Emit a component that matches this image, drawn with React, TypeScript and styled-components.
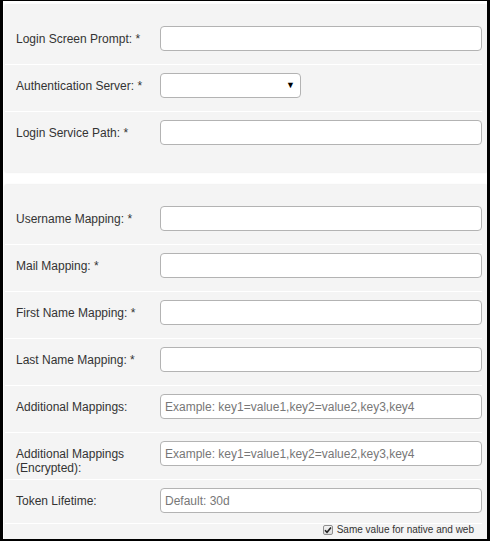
import React from 'react';
import styled, { createGlobalStyle } from 'styled-components';

const GlobalStyle = createGlobalStyle`
  html, body {
    margin: 0;
    padding: 0;
    background: #fff;
  }
  * {
    box-sizing: border-box;
  }
`;

// Cadre extérieur de la capture
const Frame = styled.div`
  width: 490px;
  height: 541px;
  overflow: hidden;
  background: #fff;
  border-style: solid;
  border-color: #000;
  border-width: 1px 3px 2px 3px;
  padding: 4px 0 0 2px;
  font-family: 'Liberation Sans', Arial, sans-serif;
  color: #333;
  display: flex;
  flex-direction: column;
  gap: 13px;
`;

const Panel = styled.section<{ $last?: boolean }>`
  background: #f4f4f4;
  box-shadow: 0 0 2px rgba(0, 0, 0, 0.15);
  padding: 13px 5px ${({ $last }) => ($last ? '20px' : '14px')} 0;
  display: flex;
  flex-direction: column;
  flex-shrink: 0;
`;

const Row = styled.div`
  display: flex;
  align-items: flex-start;
  height: 47px;
  padding: 8px 0 0 11px;
  border-top: 1px solid #fff;

  &:first-child {
    border-top: none;
    height: 46px;
  }
`;

// le libellé peut déborder sur deux lignes sans agrandir la ligne
const Label = styled.label`
  width: 144px;
  height: 25px;
  flex-shrink: 0;
  padding: 6px 14px 0 0;
  font-size: 12px;
  line-height: 14px;
  color: #333;
  overflow: visible;
`;

const TextInput = styled.input`
  flex: 1;
  height: 25px;
  margin: 0;
  padding: 0 4px;
  background: #fff;
  border: 1px solid #b3b3b3;
  border-radius: 4px;
  font-family: 'Liberation Sans', Arial, sans-serif;
  font-size: 12px;
  color: #333;
  outline: none;

  &::placeholder {
    color: #777;
  }
`;

const SelectWrap = styled.div`
  position: relative;
  width: 141px;
  height: 25px;
`;

const Select = styled.select`
  appearance: none;
  width: 100%;
  height: 100%;
  margin: 0;
  padding: 0 4px;
  background: #fff;
  border: 1px solid #b3b3b3;
  border-radius: 4px;
  font-family: 'Liberation Sans', Arial, sans-serif;
  font-size: 12px;
  outline: none;
`;

const Arrow = styled.span`
  position: absolute;
  right: 6px;
  top: 7px;
  font-size: 9px;
  line-height: 10px;
  color: #000;
  pointer-events: none;
`;

const CheckRow = styled.div`
  display: flex;
  justify-content: flex-end;
  align-items: center;
  gap: 4px;
  margin-top: -3px;
  padding-right: 8px;
  border-top: 1px solid #fff;
  font-size: 10px;
  line-height: 12px;
  color: #333;
`;

const Box = styled.span`
  width: 10px;
  height: 10px;
  border: 1px solid #8f8f8f;
  border-radius: 2px;
  background: linear-gradient(#f2f2f2, #dcdcdc);
  display: flex;
  align-items: center;
  justify-content: center;
`;

type Field = { label: string; select?: boolean; placeholder?: string };

const fields1: Field[] = [
  { label: 'Login Screen Prompt: *' },
  { label: 'Authentication Server: *', select: true },
  { label: 'Login Service Path: *' },
];

const fields2: Field[] = [
  { label: 'Username Mapping: *' },
  { label: 'Mail Mapping: *' },
  { label: 'First Name Mapping: *' },
  { label: 'Last Name Mapping: *' },
  { label: 'Additional Mappings:', placeholder: 'Example: key1=value1,key2=value2,key3,key4' },
  { label: 'Additional Mappings (Encrypted):', placeholder: 'Example: key1=value1,key2=value2,key3,key4' },
  { label: 'Token Lifetime:', placeholder: 'Default: 30d' },
];

const FieldRow: React.FC<{ field: Field }> = ({ field }) => (
  <Row>
    <Label>{field.label}</Label>
    {field.select ? (
      <SelectWrap>
        <Select defaultValue="">
          <option value=""></option>
        </Select>
        <Arrow>▼</Arrow>
      </SelectWrap>
    ) : (
      <TextInput type="text" placeholder={field.placeholder} />
    )}
  </Row>
);

const App: React.FC = () => (
  <>
    <GlobalStyle />
    <Frame>
      <Panel>
        {fields1.map((f) => (
          <FieldRow key={f.label} field={f} />
        ))}
      </Panel>
      <Panel $last>
        {fields2.map((f) => (
          <FieldRow key={f.label} field={f} />
        ))}
        <CheckRow>
          <Box>
            <svg width="8" height="8" viewBox="0 0 8 8">
              <path d="M1 4.2 L3 6.2 L7 1.5" fill="none" stroke="#222" strokeWidth="1.6" />
            </svg>
          </Box>
          Same value for native and web
        </CheckRow>
      </Panel>
    </Frame>
  </>
);

export default App;
